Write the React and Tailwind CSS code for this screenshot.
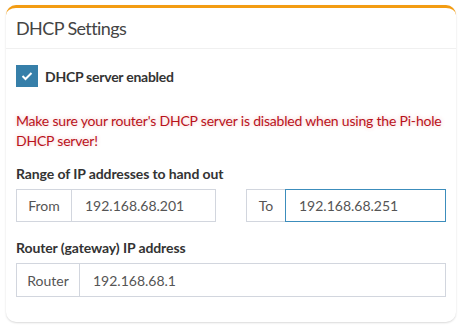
export default function App() {
  const font = { fontFamily: 'Lato, "Noto Sans", sans-serif' };
  return (
    <div className="w-[464px] h-[334px] bg-white pt-[5px] pl-[6px]" style={font}>
      <div className="w-[450px] h-[317px] bg-white rounded-[10px] border-t-[3px] border-[#f39c12] shadow-[0_1px_2px_rgba(0,0,0,0.15)]">
        <div className="h-[41px] border-b border-[#f0f0f0] pl-[10px] flex items-center">
          <h3 className="text-[18px] text-[#444] leading-none tracking-[-0.6px]">DHCP Settings</h3>
        </div>
        <div className="px-[10px] pt-[16px]">
          <div className="flex items-center gap-[7px]">
            <div className="w-[22px] h-[22px] bg-[#367fa9] flex items-center justify-center">
              <svg width="12" height="10" viewBox="0 0 12 10">
                <path d="M1.5 5 L4.5 8 L10.5 2" stroke="white" strokeWidth="2" fill="none" />
              </svg>
            </div>
            <span className="text-[14px] font-bold text-[#333] tracking-[-0.25px]">DHCP server enabled</span>
          </div>
          <p className="mt-[24px] text-[14px] leading-[20px] text-[#b9121b] tracking-[-0.2px] [text-shadow:0_0_4px_rgba(220,60,60,0.3)]">
            Make sure your router's DHCP server is disabled when using the Pi-hole DHCP server!
          </p>
          <p className="mt-[13px] text-[14px] font-bold text-[#333] leading-[20px] tracking-[-0.1px]">Range of IP addresses to hand out</p>
          <div className="mt-[5px] grid grid-cols-2 gap-[30px]">
            <div className="flex h-[33px] text-[14px] text-[#555]">
              <div className="w-[56px] border border-[#d2d6de] flex items-center justify-center">From</div>
              <div className="flex-1 border border-l-0 border-[#d2d6de] flex items-center pl-[13px]">192.168.68.201</div>
            </div>
            <div className="flex h-[33px] text-[14px] text-[#555]">
              <div className="w-[39px] border border-r-0 border-[#d2d6de] flex items-center justify-center">To</div>
              <div className="flex-1 border border-solid border-[color:#3c8dbc] flex items-center pl-[13px]">192.168.68.251</div>
            </div>
          </div>
          <p className="mt-[16px] text-[14px] font-bold text-[#333] leading-[20px] tracking-[-0.1px]">Router (gateway) IP address</p>
          <div className="mt-[5px] flex h-[34px] text-[14px] text-[#555]">
            <div className="w-[64px] border border-[#d2d6de] flex items-center justify-center">Router</div>
            <div className="flex-1 border border-l-0 border-[#d2d6de] flex items-center pl-[13px]">192.168.68.1</div>
          </div>
        </div>
      </div>
    </div>
  );
}
